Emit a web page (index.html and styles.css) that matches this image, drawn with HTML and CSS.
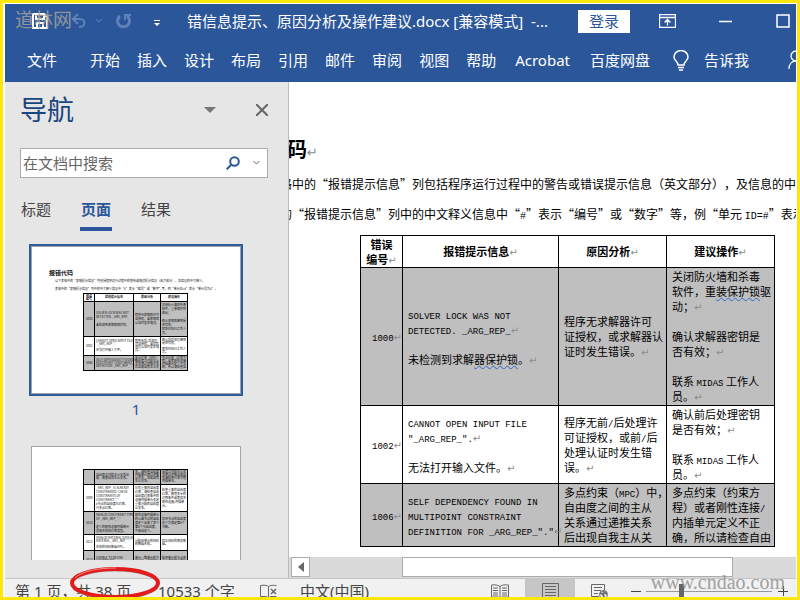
FILE: index.html
```html
<!DOCTYPE html>
<html lang="zh-CN">
<head>
    <meta charset="UTF-8">
    <meta name="viewport" content="width=device-width, initial-scale=1.0">
    <title>错信息提示、原因分析及操作建议.docx</title>
    <link rel="stylesheet" href="styles.css">
</head>
<body>
<div class="window">
    <header class="header">
        <div class="title-bar">
            <div class="quick-access">
                <button class="icon-button save" aria-label="保存">
                    <svg width="16" height="16" viewBox="0 0 16 16" fill="none" stroke="#fff" stroke-width="2"><path d="M1 1h11l3 3v11H1z"/><path d="M4 1v5h8V1M5 15v-5h6v5"/></svg>
                </button>
                <button class="icon-button undo" aria-label="撤消">
                    <svg width="14" height="16" viewBox="0 0 14 16" fill="none" stroke="#5f82b8" stroke-width="2"><path d="M6 1L1 6l5 5M1 6h7c6 0 6 8-1 8"/></svg>
                </button>
                <button class="icon-button undo-menu" aria-label="撤消列表">
                    <svg width="6" height="4" viewBox="0 0 6 4" fill="none" stroke="#5f82b8"><path d="M0 0l3 3 3-3"/></svg>
                </button>
                <button class="icon-button redo" aria-label="重复">
                    <svg width="17" height="17" viewBox="0 0 17 17" fill="none" stroke="#5f82b8" stroke-width="3"><path d="M5 3a6 6 0 1 0 7 0"/><path d="M10 7V2h6" stroke-width="2"/></svg>
                </button>
                <button class="icon-button customize" aria-label="自定义快速访问工具栏">
                    <svg width="6" height="7" viewBox="0 0 6 7" fill="#fff"><path d="M0 0h6v1H0zM0 3h6L3 6z"/></svg>
                </button>
                <span class="site-mark">道林网</span>
            </div>
            <h1 class="doc-title">错信息提示、原因分析及操作建议.docx [兼容模式] &nbsp;-...</h1>
            <button class="login">登录</button>
            <div class="window-buttons">
                <button class="icon-button" aria-label="功能区显示选项">
                    <svg width="17" height="14" viewBox="0 0 17 14" fill="none" stroke="#fff"><path d="M.5.5h16v13H.5zM.5 3.500h16M8.500 11.500V6M5.500 8.500l3-3 3 3" stroke-width="1.300"/></svg>
                </button>
                <button class="icon-button" aria-label="最小化">
                    <svg width="14" height="14" viewBox="0 0 14 14" fill="none" stroke="#fff"><path d="M0 7.500h13" stroke-width="1.500"/></svg>
                </button>
                <button class="icon-button" aria-label="最大化">
                    <svg width="14" height="14" viewBox="0 0 14 14" fill="none" stroke="#fff"><path d="M1 1h12v12H1z" stroke-width="1.500"/></svg>
                </button>
            </div>
        </div>
        <nav class="ribbon-tabs">
            <button class="file-tab">文件</button>
            <button>开始</button>
            <button>插入</button>
            <button>设计</button>
            <button>布局</button>
            <button>引用</button>
            <button>邮件</button>
            <button>审阅</button>
            <button>视图</button>
            <button>帮助</button>
            <button class="addin">Acrobat</button>
            <button>百度网盘</button>
            <button class="tell-me">
                <svg width="16" height="21" viewBox="0 0 16 21" fill="none" stroke="#fff" stroke-width="1.500"><path d="M5 15c0-4-4-4-4-8a7 6.500 0 0 1 14 0c0 4-4 4-4 8zM5 17.500h6M6 20h4"/></svg>
                <span>告诉我</span>
            </button>
            <button class="share" aria-label="共享">
                <svg width="18" height="20" viewBox="0 0 18 20" fill="none" stroke="#fff" stroke-width="1.300"><circle cx="8" cy="6" r="5"/><path d="M1 19c0-5 3-8 7-8s7 3 7 8"/></svg>
            </button>
        </nav>
    </header>

    <div class="workspace">
        <aside class="nav-pane">
            <div class="nav-head">
                <h2>导航</h2>
                <button class="icon-button" aria-label="任务窗格选项">
                    <svg width="12" height="6" viewBox="0 0 12 6" fill="#777"><path d="M0 0h12L6 6z"/></svg>
                </button>
                <button class="icon-button" aria-label="关闭">
                    <svg width="12" height="12" viewBox="0 0 12 12" fill="none" stroke="#666" stroke-width="2"><path d="M0 0l12 12M12 0L0 12"/></svg>
                </button>
            </div>
            <div class="search">
                <input type="text" placeholder="在文档中搜索" aria-label="在文档中搜索">
                <button class="icon-button" aria-label="搜索">
                    <svg width="14" height="14" viewBox="0 0 14 14" fill="none" stroke="#2b579a" stroke-width="2"><circle cx="8.500" cy="5.500" r="4.300"/><path d="M5.500 8.500L.7 13.300"/></svg>
                </button>
                <button class="icon-button" aria-label="搜索选项">
                    <svg width="7" height="4" viewBox="0 0 7 4" fill="none" stroke="#666"><path d="M.5 0l3 3 3-3"/></svg>
                </button>
            </div>
            <div class="nav-tabs">
                <button>标题</button>
                <button class="active">页面</button>
                <button>结果</button>
            </div>
            <div class="thumbs">
                <div class="thumb selected">
                    <h3>报错代码</h3>
                    <p>以下表格中的“报错提示信息”列包括程序运行过程中的警告或错误提示信息（英文部分），及信息的中文释义。</p>
                    <p>表格中的“报错提示信息”列中的中文释义信息中“#”表示“编号”或“数字”等，例“单元ID=#”表示“单元号为#”。</p>
                    <table class="mini">
                        <tr class="m8"><th>错误<br>编号</th><th>报错提示信息</th><th>原因分析</th><th>建议操作</th></tr>
                        <tr class="m35 shade"><td>1000</td><td>SOLVER LOCK WAS NOT<br>DETECTED. _ARG_REP_<br><br>未检测到求解器保护锁。</td><td>程序无求解器许可<br>证授权，或求解器<br>认证时发生错误。</td><td>关闭防火墙和杀毒<br>软件，重装保护锁<br>驱动；<br><br>确认求解器密钥是<br>否有效；<br>联系MIDAS工作人<br>员。</td></tr>
                        <tr class="m19"><td>1002</td><td>CANNOT OPEN INPUT FILE<br>"_ARG_REP_".<br><br>无法打开输入文件。</td><td>程序无前/后处理<br>可证授权，或前后<br>处理认证时发生错<br>误。</td><td>确认前后处理密钥<br>是否有效；<br><br>联系MIDAS工作人<br>员。</td></tr>
                        <tr class="m15 shade"><td>1006</td><td>SELF DEPENDENCY FOUND IN<br>MULTIPOINT CONSTRAINT<br>DEFINITION _ARG_REP_"."</td><td>多点约束（MPC）<br>自由度之间的主从<br>关系通过递推关系<br>后出现自我主从关</td><td>多点约束（约束方<br>程）或者刚性连接<br>内插单元定义不正<br>确，所以请检查自</td></tr>
                    </table>
                </div>
                <div class="thumb-number">1</div>
                <div class="thumb second">
                    <table class="mini">
                        <tr class="m15 shade"><td></td><td>自由度之间的主从关系出<br>现，致使自我主从关系。</td><td>系，请检查自由度<br>内插单元通过递推<br>从关系，出现自我<br>主从关系。</td><td>由度之间的主从关<br>系通过递推出现自<br>我请检查约束方程<br>内插单元。</td></tr>
                        <tr class="m27"><td>1009</td><td>_ARG_REP_ IS ALREADY<br>CONSTRAINED. CHECK<br>CONSTRAINTS OF<br>CONSTRAINT."."<br>#节点的自由度已约束，<br>行多点约束。</td><td>已有重复的自由度<br>约束，请检查自由<br>自由度约束条件的<br>连接内插单元设定<br>重复分配的自由度<br>从关系。</td><td>检查重复的自由度<br>约束，删除多余的<br>边界条件或者修改<br>刚性连接/内插单<br>元。</td></tr>
                        <tr class="m23 shade"><td>1010</td><td>INVALID CONSTRAINT TYPE<br>OF _ARG_REP_"."<br><br>定义的刚性连接内插单元<br>发现无效的约束类型。</td><td>刚性连接内插单元<br>的从属节点的自由<br>度定义出现了某个<br>第6个节自由度，<br>不能自定义。</td><td>修改节点的自由度<br>定义为满足第6个<br>节数。</td></tr>
                        <tr class="m16"><td>1012</td><td>INVALID MATERIAL DATA IN<br>MATERIAL _ARG_REP_"."<br><br>无效的材料数据MPC。</td><td>分配给单元的材料<br>的数据无效。</td><td>修正材料的相关数<br>据。</td></tr>
                        <tr class="m19 shade"><td>1013</td><td>UNABLE TO DEFINE<br>COORDINATE</td><td>单元一维单元的方<br>向与轴，无法定义</td><td>检查单元的节点布<br>置，修正单元坐标</td></tr>
                    </table>
                </div>
            </div>
        </aside>

        <main class="doc-area">
            <div class="page">
                <h2>报错代码<span class="ret">↵</span></h2>
                <p>以下表格中的“报错提示信息”列包括程序运行过程中的警告或错误提示信息（英文部分），及信息的中文释义。<span class="ret">↵</span></p>
                <p>表格中的“报错提示信息”列中的中文释义信息中“<span class="en">#</span>”表示“编号”或“数字”等，例“单元 <span class="en">ID=#</span>”表示“单元号为<span class="en">#</span>”。</p>
                <table class="errors">
                    <thead>
                        <tr>
                            <th class="col-no">错误<br>编号<span class="ret">↵</span></th>
                            <th class="col-msg">报错提示信息<span class="ret">↵</span></th>
                            <th class="col-text">原因分析<span class="ret">↵</span></th>
                            <th class="col-text">建议操作<span class="ret">↵</span></th>
                        </tr>
                    </thead>
                    <tbody>
                        <tr class="shade tall">
                            <td class="no"><span class="en">1000</span><span class="ret">↵</span></td>
                            <td><span class="en">SOLVER LOCK WAS NOT<br>DETECTED. _ARG_REP_</span><span class="ret">↵</span><br><br>未检测到求解<span class="wavy">器保护锁</span>。<span class="ret">↵</span></td>
                            <td>程序无求解器许可<br>证授权，或求解器认<br>证时发生错误。<span class="ret">↵</span></td>
                            <td>关闭防火墙和杀毒<br>软件，重<span class="wavy">装保护锁</span>驱<br>动；<span class="ret">↵</span><br><br>确认求解器密钥是<br>否有效；<span class="ret">↵</span><br><br>联系 <span class="en">MIDAS</span> 工作人<br>员。<span class="ret">↵</span></td>
                        </tr>
                        <tr class="middle">
                            <td class="no"><span class="en">1002</span><span class="ret">↵</span></td>
                            <td><span class="en">CANNOT OPEN INPUT FILE<br>"_ARG_REP_".</span><span class="ret">↵</span><br><br>无法打开输入文件。<span class="ret">↵</span></td>
                            <td>程序无前<span class="en">/</span>后处理许<br>可证授权，或前<span class="en">/</span>后<br>处理认证时发生错<br>误。<span class="ret">↵</span></td>
                            <td>确认前后处理密钥<br>是否有效；<span class="ret">↵</span><br><br>联系 <span class="en">MIDAS</span> 工作人<br>员。<span class="ret">↵</span></td>
                        </tr>
                        <tr class="shade last">
                            <td class="no"><span class="en">1006</span><span class="ret">↵</span></td>
                            <td><span class="en">SELF DEPENDENCY FOUND IN<br>MULTIPOINT CONSTRAINT<br>DEFINITION FOR _ARG_REP_"."</span><span class="ret">↵</span></td>
                            <td>多点约束（<span class="en">MPC</span>）中，<br>自由度之间的主从<br>关系通过递推关系<br>后出现自我主从关</td>
                            <td>多点约束（约束方<br>程）或者刚性连接<span class="en">/</span><br>内插单元定义不正<br>确，所以请检查自由</td>
                        </tr>
                    </tbody>
                </table>
            </div>
            <div class="scrollbar">
                <button class="scroll-left" aria-label="向左滚动">
                    <svg width="6" height="10" viewBox="0 0 6 10" fill="#666"><path d="M6 0v10L0 5z"/></svg>
                </button>
                <div class="scroll-track"><div class="scroll-thumb"></div></div>
            </div>
        </main>
    </div>

    <footer class="status-bar">
        <span class="page-count">第 1 页，共 38 页</span>
        <span class="word-count">10533 个字</span>
        <button class="icon-button proofing" aria-label="校对">
            <svg width="18" height="15" viewBox="0 0 18 15" fill="none" stroke="#666"><path d="M8.500 2.500C7 1 4 1 .5 1.500v11h6l2 1.500V2.500c1-1 3-1.500 8-1M8.500 14l2-1.500h6"/><path d="M11 5l5 5M16 5l-5 5" stroke-width="1.500"/></svg>
        </button>
        <span class="language">中文(中国)</span>
        <div class="view-buttons">
            <button class="icon-button" aria-label="阅读视图">
                <svg width="18" height="15" viewBox="0 0 18 15" fill="none" stroke="#666"><path d="M9 2.500C7 1 4 .5.5 1v12h7L9 14.500l1.500-1.500h7V1c-4-.5-7 0-8.500 1.500zM9 2v12M2 4h5M2 6.500h5M2 9h5M2 11h5M11 4h5M11 6.500h5M11 9h5M11 11h5"/></svg>
            </button>
            <button class="icon-button active" aria-label="页面视图">
                <svg width="17" height="16" viewBox="0 0 17 16" fill="none" stroke="#666"><path d="M.5.5h16v15H.5zM3 3.500h11M3 6.500h11M3 9.500h11M3 12.500h11"/></svg>
            </button>
            <button class="icon-button" aria-label="Web 版式视图">
                <svg width="18" height="16" viewBox="0 0 18 16" fill="none" stroke="#666"><path d="M8 13.500H.5V1.500h13V7M3 4.500h8M3 7.500h7M3 10.500h4"/><circle cx="12.500" cy="11.500" r="4"/><path d="M9 10l3 1 1 3M12 8l2 2 2 1" stroke-width="2"/></svg>
            </button>
        </div>
        <button class="zoom-step" aria-label="缩小"><svg width="10" height="10" viewBox="0 0 10 10" stroke="#444"><path d="M0 5.500h10"/></svg></button>
        <input class="zoom-slider" type="range" min="10" max="170" value="54" aria-label="缩放">
        <button class="zoom-step" aria-label="放大"><svg width="10" height="10" viewBox="0 0 10 10" stroke="#444"><path d="M0 5.500h10M5.500 0v10"/></svg></button>
    </footer>

    <svg class="circle-mark" viewBox="0 0 92 34" fill="none">
        <ellipse cx="47" cy="18" rx="43" ry="14" stroke="#aaa" stroke-width="3"/>
        <ellipse cx="47" cy="17" rx="43" ry="14" stroke="#e21b1b" stroke-width="4"/>
        <path d="M7 12C14 5 30 2 48 2" stroke="#f58a8a"/>
    </svg>
    <span class="url-mark">www.cndao.com</span>
</div>
</body>
</html>
```
FILE: styles.css
```css
* {
    box-sizing: border-box;
}
body {
    margin: 0;
    font-family: "Noto Sans", "Noto Sans CJK SC", sans-serif;
    font-size: 15px;
    color: #444;
}
h1, h2, h3, p {
    margin: 0;
    font-weight: normal;
}
button {
    padding: 0;
    border: none;
    background: none;
    color: inherit;
    font: inherit;
    white-space: nowrap;
    cursor: pointer;
}
svg {
    display: block;
    flex-shrink: 0;
}
.icon-button {
    display: flex;
    align-items: center;
    justify-content: center;
    flex-shrink: 0;
}
.window {
    position: relative;
    display: flex;
    flex-direction: column;
    height: 100vh;
    min-height: 400px;
    border: 3px solid #fde60b;
    padding: 1px 1px 0 2px;
    overflow: hidden;
}

/* 标题栏和功能区 */
.header {
    flex-shrink: 0;
    background: #2b579a;
    color: #fff;
}
.title-bar {
    display: flex;
    align-items: center;
    height: 34px;
    overflow: hidden;
}
.quick-access {
    position: relative;
    display: flex;
    align-items: center;
    flex-shrink: 0;
    width: 182px;
    padding-left: 27px;
}
.undo {
    margin-left: 24px;
}
.undo-menu {
    margin-left: 10px;
}
.redo {
    margin-left: 13px;
}
.customize {
    margin-left: 22px;
    padding-top: 4px;
}
.site-mark {
    position: absolute;
    left: 10px;
    top: -4px;
    font-family: "Liberation Serif", "Noto Sans CJK SC", serif;
    font-size: 19px;
    line-height: 24px;
    color: #aaa59c;
    opacity: 0.8;
}
.doc-title {
    flex: 1;
    font-size: 15px;
    line-height: 30px;
    white-space: nowrap;
    overflow: hidden;
}
.login {
    flex-shrink: 0;
    width: 52px;
    height: 23px;
    margin-right: 29px;
    line-height: 22px;
    background: #fff;
    color: #2b579a;
}
.window-buttons {
    display: flex;
    gap: 43px;
    flex-shrink: 0;
    padding-right: 6px;
}
.ribbon-tabs {
    display: flex;
    align-items: center;
    gap: 17px;
    height: 44px;
    padding-left: 22px;
    line-height: 24px;
    overflow: hidden;
}
.ribbon-tabs button {
    flex-shrink: 0;
}
.file-tab {
    margin-right: 16px;
}
.ribbon-tabs .addin {
    padding: 0 3px 0 2px;
}
.tell-me {
    display: flex;
    align-items: center;
    gap: 15px;
    margin-left: 6px;
}
.share {
    margin-left: 22px;
}

/* 导航窗格 */
.workspace {
    display: flex;
    flex: 1;
    min-height: 0;
}
.nav-pane {
    display: flex;
    flex-direction: column;
    flex-shrink: 0;
    width: 284px;
    padding: 10px 20px 18px 15px;
    background: #e6e6e6;
    border-right: 1px solid #bbb;
}
.nav-head {
    display: flex;
    align-items: center;
    gap: 40px;
    flex-shrink: 0;
    height: 36px;
}
.nav-head h2 {
    flex: 1;
    font-size: 27px;
    line-height: 36px;
    color: #17457f;
}
.search {
    display: flex;
    gap: 13px;
    flex-shrink: 0;
    height: 30px;
    margin-top: 20px;
    padding: 0 7px 0 2px;
    background: #fff;
    border: 1px solid #ababab;
}
.search input {
    flex: 1;
    min-width: 0;
    padding: 0;
    border: none;
    outline: none;
    background: none;
    font: inherit;
}
.search input::placeholder {
    color: #666;
}
.nav-tabs {
    display: flex;
    gap: 28px;
    flex-shrink: 0;
    margin-top: 16px;
}
.nav-tabs button {
    width: 32px;
    height: 37px;
    padding-bottom: 3px;
    border-bottom: 4px solid transparent;
    line-height: 28px;
}
.nav-tabs .active {
    border-color: #2b579a;
    color: #2b579a;
    font-weight: bold;
}
.thumbs {
    flex: 1;
    min-height: 0;
    margin-top: 13px;
    padding-left: 9px;
    overflow: hidden;
}
.thumb {
    width: 214px;
    height: 152px;
    padding: 23px 0 0 18px;
    background: #fff;
    border: 2px solid #2b5d9b;
    outline: 1px solid #a0a6ae;
    outline-offset: -3px;
    color: #111;
    font-family: "Noto Sans CJK SC", sans-serif;
    font-size: 3px;
    line-height: 4px;
    white-space: nowrap;
    text-spacing-trim: space-all;
    overflow: hidden;
}
.thumb h3 {
    font-size: 6px;
    line-height: 8px;
    font-weight: bold;
}
.thumb p {
    padding-left: 6px;
    line-height: 8px;
}
.thumb.second {
    width: 210px;
    margin-left: 2px;
    padding: 22px 0 0 18px;
    border: 1px solid #a0a6ae;
    outline: none;
}
.thumb-number {
    width: 214px;
    padding: 1px 0 25px;
    line-height: 24px;
    text-align: center;
    color: #2b579a;
}
.mini {
    width: 105px;
    margin-left: 34px;
    border-collapse: collapse;
    table-layout: fixed;
}
.second .mini {
    margin-left: 33px;
}
.mini th, .mini td {
    width: 27px;
    padding: 0 1px;
    border: 1px solid #000;
    line-height: 3px;
}
.mini .m35 td, .mini .m27 td, .mini .m23 td {
    line-height: 4px;
}
.mini th:first-child, .mini td:first-child {
    width: 11px;
    text-align: center;
}
.mini th:nth-child(2), .mini td:nth-child(2) {
    width: 39px;
}
.m8 { height: 8px; }
.m15 { height: 15px; }
.m16 { height: 16px; }
.m19 { height: 19px; }
.m23 { height: 23px; }
.m27 { height: 27px; }
.m35 { height: 35px; }
.shade {
    background: #bfbfbf;
}

/* 文档 */
.doc-area {
    display: flex;
    flex-direction: column;
    flex: 1;
    min-width: 0;
    background: #fff;
    color: #000;
    overflow: hidden;
}
.page {
    flex: 1;
    min-height: 0;
    margin-left: -62px;
    padding-top: 52px;
    font-family: "Noto Sans CJK SC", sans-serif;
    font-size: 12px;
    white-space: nowrap;
    text-spacing-trim: space-all;
    overflow: hidden;
}
.page h2 {
    margin-bottom: 5px;
    font-size: 20px;
    line-height: 30px;
    font-weight: bold;
}
.page p {
    padding-left: 17px;
    line-height: 30px;
}
.page .en {
    font-family: "Liberation Mono", monospace;
    font-size: 10px;
    line-height: 0;
}
.ret {
    font-family: "DejaVu Sans", sans-serif;
    font-size: 10px;
    font-weight: normal;
    line-height: 0;
    color: #8a8a8a;
}
h2 .ret {
    font-size: 13px;
}
.errors {
    width: 415px;
    margin: 6px 0 0 133px;
    border-collapse: collapse;
    table-layout: fixed;
    font-size: 11px;
    line-height: 15px;
}
.errors th, .errors td {
    padding: 0 0 0 5px;
    border: 1px solid #000;
    text-align: left;
}
.errors th {
    height: 32px;
    padding: 0;
    text-align: center;
}
.errors .en {
    font-size: 9px;
}
.errors .no {
    padding: 0;
    text-align: right;
}
.col-no {
    width: 42px;
}
.col-msg {
    width: 156px;
}
.col-text {
    width: 108px;
}
.tall {
    height: 138px;
}
.middle {
    height: 78px;
}
.last {
    height: 63px;
}
.wavy {
    text-decoration: underline wavy #2f67c8 1px;
}
.scrollbar {
    display: flex;
    flex-shrink: 0;
    height: 21px;
    padding: 0 1px 1px 2px;
    background: #dadada;
}
.scroll-left {
    display: flex;
    align-items: center;
    justify-content: center;
    width: 19px;
    background: #fff;
    border: 1px solid #ababab;
}
.scroll-track {
    display: flex;
    flex: 1;
    padding: 0 13% 0 19%;
}
.scroll-thumb {
    flex: 1;
    margin: 0 -4px;
    background: #fff;
    border: 1px solid #ababab;
}

/* 状态栏 */
.status-bar {
    display: flex;
    flex-shrink: 0;
    height: 19px;
    padding: 0 8px 0 10px;
    background: #f1f1f1;
    border-top: 1px solid #c6c6c6;
    line-height: 24px;
    white-space: nowrap;
    overflow: hidden;
}
.status-bar > * {
    flex-shrink: 0;
    height: 24px;
}
.page-count {
    width: 143px;
}
.word-count {
    width: 102px;
}
.language {
    margin-left: 22px;
}
.view-buttons {
    display: flex;
    margin-left: auto;
}
.view-buttons .icon-button {
    width: 50px;
}
.view-buttons .active {
    background: #c6c6c6;
}
.zoom-step {
    display: flex;
    align-items: center;
    margin-left: 6px;
}
.zoom-slider {
    width: 126px;
    margin: 0 0 0 5px;
    appearance: none;
    background: linear-gradient(#999, #999) center / 100% 1px no-repeat;
}
.zoom-slider::-webkit-slider-thumb {
    appearance: none;
    width: 5px;
    height: 14px;
    background: #666;
}

/* 标注 */
.circle-mark {
    position: absolute;
    left: 65px;
    bottom: -3px;
    width: 92px;
    height: 34px;
}
.url-mark {
    position: absolute;
    right: 12px;
    bottom: 2px;
    font-family: "Liberation Serif", serif;
    font-size: 20px;
    line-height: 26px;
    color: #8c8c8c;
    opacity: 0.8;
}
```
